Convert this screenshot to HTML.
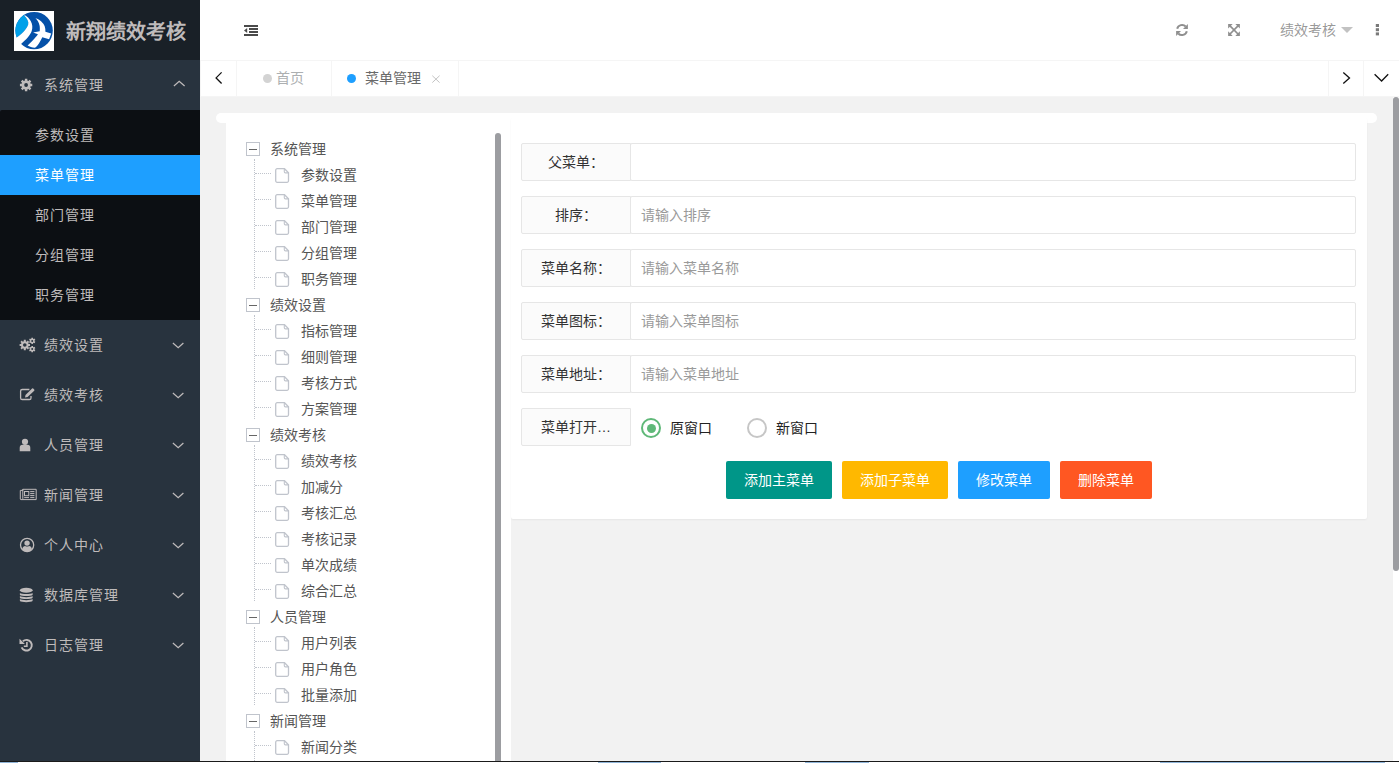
<!DOCTYPE html>
<html lang="zh-CN">
<head>
<meta charset="utf-8">
<title>新翔绩效考核</title>
<style>
*{box-sizing:border-box;margin:0;padding:0}
html,body{width:1399px;height:763px;overflow:hidden;background:#f2f2f2}
body{font-family:"Liberation Sans",sans-serif;font-size:14px;color:#333;position:relative;line-height:24px}
ul{list-style:none}
/* ---------- sidebar ---------- */
#side{position:absolute;left:0;top:0;width:200px;height:761px;background:#28333e;overflow:hidden}
#logo{position:absolute;left:0;top:0;width:200px;height:60px;background:#192027}
#logo svg{position:absolute;left:14px;top:11px;width:40px;height:40px}
#logo h1{position:absolute;left:66px;top:2px;height:60px;line-height:60px;font-size:20px;font-weight:bold;color:#bfbbbb;white-space:nowrap}
#menu{position:absolute;left:0;top:60px;width:200px}
#menu .it{position:relative;height:50px;line-height:50px;color:#bfbbbb;letter-spacing:1px;padding-left:44px;white-space:nowrap}
#menu .it svg.ic{position:absolute;left:14px;top:13px;width:30px;height:24px;fill:#bfbbbb}
#menu .it svg.ar{position:absolute;left:160px;top:10px;width:40px;height:30px;fill:none;stroke:#bfbbbb;stroke-width:1.25}
#menu .child{background:#0c0f13;padding:5px 0;border-top-left-radius:2px}
#menu .child li{height:40px;line-height:40px;padding-left:35px;color:#bfbbbb;letter-spacing:1px;white-space:nowrap}
#menu .child li.this{background:#1e9fff;color:#fff}
/* ---------- header ---------- */
#head{position:absolute;left:200px;top:0;width:1199px;height:60px;background:#fff}
#head svg{position:absolute}
#head .user{position:absolute;left:1080px;top:0;height:60px;line-height:60px;color:rgba(107,107,107,.7);white-space:nowrap}
#head .tri{position:absolute;left:1141px;top:27px;width:0;height:0;border:6px solid transparent;border-top-color:#c2c2c2;border-bottom-width:0}
/* ---------- tabs ---------- */
#tabs{position:absolute;left:200px;top:60px;width:1199px;height:37px;background:#fff;border-top:1px solid #f5f5f5;border-bottom:1px solid #f5f5f5}
#tabs .cell{position:absolute;top:0;height:35px;line-height:35px;white-space:nowrap}
#tabs .sep{position:absolute;top:0;width:1px;height:35px;background:#f5f5f5}
#tabs .dot{position:absolute;top:13px;width:9px;height:9px;border-radius:50%}
#tabs svg{position:absolute;fill:none}
/* ---------- content ---------- */
#strip{position:absolute;left:216px;top:113px;width:1161px;height:10px;background:#fff;border-radius:5px}
#treebox{position:absolute;left:226px;top:118px;width:285px;height:643px;background:#fff}
#formcard{position:absolute;left:511px;top:118px;width:856px;height:401px;border-radius:2px;background:#fff;box-shadow:0 1px 2px 0 rgba(0,0,0,.05)}
.thumb{position:absolute;width:6px;border-radius:3px;background:#9c9da1}
#vtrack{position:absolute;left:1393px;top:97px;width:6px;height:664px;background:#fff}
/* tree */
#tree{position:absolute;left:10px;top:18px;width:259px}
#tree .row{position:relative;height:26px;line-height:26px;color:#555;white-space:nowrap}
#tree .p{padding-left:34px}
#tree .c{padding-left:65px}
#tree .box{position:absolute;left:10px;top:6px;width:14px;height:14px;border:1px solid #c0c4cc}
#tree .box:after{content:"";position:absolute;left:2px;top:5.5px;width:8px;height:1px;background:#666}
#tree .c svg{position:absolute;left:39px;top:6px;width:15px;height:15px;fill:none;stroke:#c0c4cc;stroke-width:1.3}
#tree .c:before{content:"";position:absolute;left:19px;top:11px;width:16px;border-top:1px dotted #c0c4cc}
#tree .vl{position:absolute;left:18px;width:0;border-left:1px dotted #c0c4cc}
/* form */
.frow{position:absolute;left:10px;width:835px;height:38px}
.frow .lab{position:absolute;left:0;top:0;width:110px;height:38px;line-height:20px;padding:8px 15px;border:1px solid #e6e6e6;border-radius:2px 0 0 2px;background:#fbfbfb;text-align:center;overflow:hidden;white-space:nowrap;text-overflow:ellipsis;color:#333}
.frow .inp{position:absolute;left:109px;top:0;width:726px;height:38px;line-height:36px;border:1px solid #e6e6e6;border-radius:2px;background:#fff;padding-left:10px;color:#9a9a9a;white-space:nowrap}
.radio{position:absolute;top:0;height:38px;line-height:38px;white-space:nowrap;color:#222}
.radio i{position:absolute;left:0;top:10px;width:20px;height:20px;border-radius:50%;border:2px solid #c6c6c6}
.radio.on i{border-color:#5fb878}
.radio.on i:after{content:"";position:absolute;left:3.500px;top:3.500px;width:9px;height:9px;border-radius:50%;background:#5fb878}
.radio span{position:absolute;left:29px;top:1px}
.btn{position:absolute;top:343px;height:38px;line-height:38px;color:#fff;border-radius:2px;text-align:center;white-space:nowrap}
#bottomline{position:absolute;left:0;top:761px;width:1399px;height:1px;background:#1a1a1a}
#bottomrow{position:absolute;left:0;top:762px;width:1399px;height:1px;background:#fff}
#bottomrow i{position:absolute;top:0;height:1px;background:#8fb4d8}
</style>
</head>
<body>
<!-- SIDEBAR -->
<div id="side">
  <div id="logo">
    <svg viewBox="0 0 40 40"><defs><clipPath id="lc"><circle cx="20.1" cy="19.6" r="18.7"/></clipPath></defs><rect width="40" height="40" fill="#fff"/><circle cx="20.1" cy="19.6" r="18.7" fill="#0450a8"/><g clip-path="url(#lc)"><path fill="#00a0e9" d="M10.2 4.4C13 7.5 15 10.500 14.2 13.5C13.3 17 9.5 21.500 2.700 26.600L-2 26.600V0H10.200Z"/></g><g><path fill="#fff" d="M10.2 4.400C13 7.500 15 10.500 14.200 13.500C13.300 17 9.500 21.500 2.700 26.600L0 30L6.800 33.200C12 29 16.500 24 17.700 20.100C18.800 16.500 18.500 13 16.700 9.900C15.300 7.500 13 5.500 10.900 4.300Z"/><path fill="#fff" d="M21.500 7.200C26 8.500 29.500 12 30.700 15.300C31.300 17 31.500 19 31.400 20.800L37.200 22.500L35.100 28.300L28.300 26.200C27 29 25.500 31.500 24.900 32.400C23.500 34.500 22 36 20.800 36.800C18 36.500 15.500 35.500 13.600 34.400C16 32.500 18.500 30 20.500 27.600C22 25.800 23.200 24.500 23.900 23.300L19.100 21.500L25.700 20.300C25.900 18 25.900 16.500 25.600 14.700C25 11.500 23.500 9 21.500 7.200Z"/></g></svg>
    <h1>新翔绩效考核</h1>
  </div>
  <div id="menu">
    <div class="it"><svg class="ic" viewBox="0 0 30 24"><path fill-rule="evenodd" d="M10.90 7.46 L10.87 5.82 L13.33 5.82 L13.30 7.46 L14.46 7.94 L15.60 6.76 L17.34 8.50 L16.16 9.64 L16.64 10.80 L18.28 10.77 L18.28 13.23 L16.64 13.20 L16.16 14.36 L17.34 15.50 L15.60 17.24 L14.46 16.06 L13.30 16.54 L13.33 18.18 L10.87 18.18 L10.90 16.54 L9.74 16.06 L8.60 17.24 L6.86 15.50 L8.04 14.36 L7.56 13.20 L5.92 13.23 L5.92 10.77 L7.56 10.80 L8.04 9.64 L6.86 8.50 L8.60 6.76 L9.74 7.94Z M10.20 12.00a1.9 1.9 0 1 0 3.8 0a1.9 1.9 0 1 0 -3.8 0Z"/></svg>系统管理<svg class="ar" viewBox="0 0 40 30"><path d="M13.9 16L19.200 11.300L24.600 16"/></svg></div>
    <ul class="child">
      <li>参数设置</li>
      <li class="this">菜单管理</li>
      <li>部门管理</li>
      <li>分组管理</li>
      <li>职务管理</li>
    </ul>
    <div class="it"><svg class="ic" viewBox="0 0 30 24"><path fill-rule="evenodd" d="M9.80 8.23 L9.77 6.80 L11.83 6.80 L11.80 8.23 L12.76 8.63 L13.74 7.59 L15.21 9.06 L14.17 10.04 L14.57 11.00 L16.00 10.97 L16.00 13.03 L14.57 13.00 L14.17 13.96 L15.21 14.94 L13.74 16.41 L12.76 15.37 L11.80 15.77 L11.83 17.20 L9.77 17.20 L9.80 15.77 L8.84 15.37 L7.86 16.41 L6.39 14.94 L7.43 13.96 L7.03 13.00 L5.60 13.03 L5.60 10.97 L7.03 11.00 L7.43 10.04 L6.39 9.06 L7.86 7.59 L8.84 8.63Z M9.00 12.00a1.8 1.8 0 1 0 3.6 0a1.8 1.8 0 1 0 -3.6 0Z"/><path fill-rule="evenodd" d="M17.32 5.78 L17.35 4.71 L19.05 4.71 L19.08 5.78 L19.60 6.08 L20.53 5.57 L21.39 7.05 L20.48 7.60 L20.48 8.20 L21.39 8.75 L20.53 10.23 L19.60 9.72 L19.08 10.02 L19.05 11.09 L17.35 11.09 L17.32 10.02 L16.80 9.72 L15.87 10.23 L15.01 8.75 L15.92 8.20 L15.92 7.60 L15.01 7.05 L15.87 5.57 L16.80 6.08Z M17.20 7.90a1.0 1.0 0 1 0 2.0 0a1.0 1.0 0 1 0 -2.0 0Z"/><path fill-rule="evenodd" d="M17.32 13.98 L17.35 12.91 L19.05 12.91 L19.08 13.98 L19.60 14.28 L20.53 13.77 L21.39 15.25 L20.48 15.80 L20.48 16.40 L21.39 16.95 L20.53 18.43 L19.60 17.92 L19.08 18.22 L19.05 19.29 L17.35 19.29 L17.32 18.22 L16.80 17.92 L15.87 18.43 L15.01 16.95 L15.92 16.40 L15.92 15.80 L15.01 15.25 L15.87 13.77 L16.80 14.28Z M17.20 16.10a1.0 1.0 0 1 0 2.0 0a1.0 1.0 0 1 0 -2.0 0Z"/></svg>绩效设置<svg class="ar" viewBox="0 0 40 30"><path d="M12.9 13L18.200 17.600L23.400 13"/></svg></div>
    <div class="it"><svg class="ic" viewBox="0 0 30 24"><path fill="none" stroke="#bfbbbb" stroke-width="1.3" d="M15.4 6.5H8.2a1.6 1.6 0 0 0-1.6 1.6v6.8a1.6 1.6 0 0 0 1.6 1.6h7.2a1.6 1.6 0 0 0 1.6-1.6V13"/><path d="M11 14.6l.5-2.6 6.6-6.4a.8.8 0 0 1 1.1 0l1 1a.8.8 0 0 1 0 1.1l-6.6 6.4z"/></svg>绩效考核<svg class="ar" viewBox="0 0 40 30"><path d="M12.9 13L18.200 17.600L23.400 13"/></svg></div>
    <div class="it"><svg class="ic" viewBox="0 0 30 24"><circle cx="11" cy="8.8" r="3.1"/><path d="M5.7 18.2v-3.4a3 3 0 0 1 3-3h4.6a3 3 0 0 1 3 3v3.4z"/></svg>人员管理<svg class="ar" viewBox="0 0 40 30"><path d="M12.9 13L18.200 17.600L23.400 13"/></svg></div>
    <div class="it"><svg class="ic" viewBox="0 0 30 24"><g fill="none" stroke="#bfbbbb" stroke-width="1"><path d="M8.8 6.3h13.4v10.3H6.9a.6.6 0 0 1-.6-.6V7.4h2.5z"/><path d="M8.8 6.3v9.6"/><rect x="10.5" y="8.5" width="4.3" height="4.2"/><path d="M16.2 8.6h4.2M16.2 10.6h4.2M16.2 12.6h4.2M10.2 14.6h4.8M16.2 14.6h4.2"/></g></svg>新闻管理<svg class="ar" viewBox="0 0 40 30"><path d="M12.9 13L18.200 17.600L23.400 13"/></svg></div>
    <div class="it"><svg class="ic" viewBox="0 0 30 24"><circle cx="13.1" cy="12" r="6.6" fill="none" stroke="#bfbbbb" stroke-width="1.3"/><circle cx="13.05" cy="10.1" r="2.7"/><path d="M8.2 16.2c.4-2.2 1.6-3.2 2.9-3.3.6.4 1.3.6 2 .6s1.400-.2 2-.6c1.300.1 2.500 1.100 2.900 3.300a6.300 6.300 0 0 1-9.800 0z"/></svg>个人中心<svg class="ar" viewBox="0 0 40 30"><path d="M12.9 13L18.200 17.600L23.400 13"/></svg></div>
    <div class="it"><svg class="ic" viewBox="0 0 30 24"><ellipse cx="12.25" cy="7.2" rx="6.35" ry="2.5"/><path d="M5.9 10.0c1.5 1.4 11.2 1.4 12.700 0v1.9c-1.5 1.4-11.200 1.4-12.700 0z"/><path d="M5.9 13.1c1.5 1.4 11.2 1.4 12.700 0v1.9c-1.5 1.4-11.200 1.4-12.700 0z"/><path d="M5.9 16.1c1.5 1.4 11.2 1.4 12.700 0v2.0c-1.5 1.4-11.200 1.4-12.700 0z"/></svg>数据库管理<svg class="ar" viewBox="0 0 40 30"><path d="M12.9 13L18.200 17.600L23.400 13"/></svg></div>
    <div class="it"><svg class="ic" viewBox="0 0 30 24"><path fill="none" stroke="#bfbbbb" stroke-width="1.9" d="M8.9 8.3A5.3 5.3 0 1 1 7.6 14.300"/><path d="M5.5 5.800v5.200h5.400z"/><path fill="none" stroke="#bfbbbb" stroke-width="1.6" d="M12.9 9v4.200h-3.100"/></svg>日志管理<svg class="ar" viewBox="0 0 40 30"><path d="M12.9 13L18.200 17.600L23.400 13"/></svg></div>
  </div>
</div>
<!-- HEADER -->
<div id="head">
  <svg style="left:30px;top:15px;width:60px;height:32px" viewBox="0 0 60 32" fill="#4a4a4a"><rect x="14" y="10" width="14" height="2"/><rect x="19" y="13" width="9" height="2"/><rect x="19" y="16" width="9" height="2"/><rect x="14" y="19" width="14" height="2"/><path d="M17.200 13v5l-3.200-2.500z"/></svg>
  <svg style="left:967px;top:18px;width:30px;height:24px" viewBox="0 0 30 24"><g fill="none" stroke="#8f8f8f" stroke-width="2"><path d="M10.2 10.800A5 5 0 0 1 18.700 8.500"/><path d="M19.800 13.200A5 5 0 0 1 11.300 15.500"/></g><g fill="#8f8f8f"><path d="M20.900 6.100v4.900h-4.900z"/><path d="M9.100 17.900v-4.900h4.900z"/></g></svg>
  <svg style="left:1019px;top:18px;width:30px;height:24px" viewBox="0 0 30 24"><g fill="#8f8f8f"><path d="M9.100 6h4.600l-4.600 4.600z"/><path d="M20.900 6v4.600l-4.600-4.600z"/><path d="M9.100 17.900v-4.600l4.600 4.600z"/><path d="M20.900 17.900h-4.600l4.600-4.600z"/></g><path stroke="#8f8f8f" stroke-width="1.700" d="M10.500 7.400l9 9.100M19.500 7.400l-9 9.100"/></svg>
  <svg style="left:1175px;top:23px;width:5px;height:14px" viewBox="0 0 5 14" fill="#7a7a7a"><rect x=".8" y="1" width="3.200" height="3"/><rect x=".8" y="5.200" width="3.200" height="3"/><rect x=".8" y="9.400" width="3.200" height="3"/></svg>
  <div class="user">绩效考核</div>
  <div class="tri"></div>
</div>
<!-- TABS -->
<div id="tabs">
  <svg style="left:3px;top:5px;width:30px;height:24px" viewBox="0 0 30 24"><path stroke="#111" stroke-width="1.300" d="M18.600 6.400L13.100 11.900L18.600 17.500"/></svg>
  <svg style="left:1130px;top:1px;width:69px;height:34px" viewBox="0 0 69 34"><path stroke="#111" stroke-width="1.300" d="M13.300 10.400L19.500 15.900L13.300 21.600M44.600 12.200L51.600 19L58.200 12.200"/></svg>
  <svg style="left:221px;top:5px;width:30px;height:24px" viewBox="0 0 30 24"><path stroke="#c4c4c4" stroke-width="1" d="M11.300 9.700l7.300 6.900M18.600 9.700l-7.300 6.900"/></svg>
  <div class="sep" style="left:0"></div>
  <div class="sep" style="left:36px"></div>
  <div class="dot" style="left:63px;background:#d3d3d3"></div>
  <div class="cell" style="left:76px;color:#acafb1">首页</div>
  <div class="sep" style="left:131px"></div>
  <div class="dot" style="left:147px;background:#1e9fff"></div>
  <div class="cell" style="left:165px;color:#696969">菜单管理</div>
  <div class="sep" style="left:258px"></div>
  <div class="sep" style="left:1128px"></div>
  <div class="sep" style="left:1163px"></div>
</div>
<!-- CONTENT -->
<div id="strip"></div>
<div id="treebox">
  <div id="tree">
    <div class="row p"><span class="box"></span>系统管理</div>
    <div class="vl" style="top:23px;height:130px"></div>
    <div class="row c"><svg viewBox="0 0 15 15"><path d="M2.2 .7h7.3l4 4v8.100a1.500 1.500 0 0 1-1.500 1.500H2.200A1.500 1.500 0 0 1 .700 12.800V2.200A1.500 1.500 0 0 1 2.200 .700z"/><path d="M9.300 .800v3a1.100 1.100 0 0 0 1.100 1.100h3" stroke-width="1.100"/></svg>参数设置</div>
    <div class="row c"><svg viewBox="0 0 15 15"><path d="M2.2 .7h7.3l4 4v8.100a1.500 1.500 0 0 1-1.500 1.500H2.200A1.500 1.500 0 0 1 .700 12.800V2.200A1.500 1.500 0 0 1 2.200 .700z"/><path d="M9.300 .800v3a1.100 1.100 0 0 0 1.100 1.100h3" stroke-width="1.100"/></svg>菜单管理</div>
    <div class="row c"><svg viewBox="0 0 15 15"><path d="M2.2 .7h7.3l4 4v8.100a1.500 1.500 0 0 1-1.500 1.500H2.200A1.500 1.500 0 0 1 .700 12.800V2.200A1.500 1.500 0 0 1 2.200 .700z"/><path d="M9.300 .800v3a1.100 1.100 0 0 0 1.100 1.100h3" stroke-width="1.100"/></svg>部门管理</div>
    <div class="row c"><svg viewBox="0 0 15 15"><path d="M2.2 .7h7.3l4 4v8.100a1.500 1.500 0 0 1-1.500 1.500H2.200A1.500 1.500 0 0 1 .700 12.800V2.200A1.500 1.500 0 0 1 2.200 .700z"/><path d="M9.300 .800v3a1.100 1.100 0 0 0 1.100 1.100h3" stroke-width="1.100"/></svg>分组管理</div>
    <div class="row c"><svg viewBox="0 0 15 15"><path d="M2.2 .7h7.3l4 4v8.100a1.500 1.500 0 0 1-1.500 1.500H2.200A1.500 1.500 0 0 1 .700 12.800V2.200A1.500 1.500 0 0 1 2.200 .700z"/><path d="M9.300 .800v3a1.100 1.100 0 0 0 1.100 1.100h3" stroke-width="1.100"/></svg>职务管理</div>
    <div class="row p"><span class="box"></span>绩效设置</div>
    <div class="vl" style="top:179px;height:104px"></div>
    <div class="row c"><svg viewBox="0 0 15 15"><path d="M2.2 .7h7.3l4 4v8.100a1.500 1.500 0 0 1-1.500 1.500H2.200A1.500 1.500 0 0 1 .700 12.800V2.200A1.500 1.500 0 0 1 2.200 .700z"/><path d="M9.300 .800v3a1.100 1.100 0 0 0 1.100 1.100h3" stroke-width="1.100"/></svg>指标管理</div>
    <div class="row c"><svg viewBox="0 0 15 15"><path d="M2.2 .7h7.3l4 4v8.100a1.500 1.500 0 0 1-1.500 1.500H2.200A1.500 1.500 0 0 1 .700 12.800V2.200A1.500 1.500 0 0 1 2.200 .700z"/><path d="M9.300 .800v3a1.100 1.100 0 0 0 1.100 1.100h3" stroke-width="1.100"/></svg>细则管理</div>
    <div class="row c"><svg viewBox="0 0 15 15"><path d="M2.2 .7h7.3l4 4v8.100a1.500 1.500 0 0 1-1.500 1.500H2.200A1.500 1.500 0 0 1 .700 12.800V2.200A1.500 1.500 0 0 1 2.200 .700z"/><path d="M9.300 .800v3a1.100 1.100 0 0 0 1.100 1.100h3" stroke-width="1.100"/></svg>考核方式</div>
    <div class="row c"><svg viewBox="0 0 15 15"><path d="M2.2 .7h7.3l4 4v8.100a1.500 1.500 0 0 1-1.500 1.500H2.200A1.500 1.500 0 0 1 .700 12.800V2.200A1.500 1.500 0 0 1 2.200 .700z"/><path d="M9.300 .800v3a1.100 1.100 0 0 0 1.100 1.100h3" stroke-width="1.100"/></svg>方案管理</div>
    <div class="row p"><span class="box"></span>绩效考核</div>
    <div class="vl" style="top:309px;height:156px"></div>
    <div class="row c"><svg viewBox="0 0 15 15"><path d="M2.2 .7h7.3l4 4v8.100a1.500 1.500 0 0 1-1.500 1.500H2.200A1.500 1.500 0 0 1 .700 12.800V2.200A1.500 1.500 0 0 1 2.200 .700z"/><path d="M9.300 .800v3a1.100 1.100 0 0 0 1.100 1.100h3" stroke-width="1.100"/></svg>绩效考核</div>
    <div class="row c"><svg viewBox="0 0 15 15"><path d="M2.2 .7h7.3l4 4v8.100a1.500 1.500 0 0 1-1.500 1.500H2.200A1.500 1.500 0 0 1 .700 12.800V2.200A1.500 1.500 0 0 1 2.200 .700z"/><path d="M9.300 .800v3a1.100 1.100 0 0 0 1.100 1.100h3" stroke-width="1.100"/></svg>加减分</div>
    <div class="row c"><svg viewBox="0 0 15 15"><path d="M2.2 .7h7.3l4 4v8.100a1.500 1.500 0 0 1-1.500 1.500H2.200A1.500 1.500 0 0 1 .700 12.800V2.200A1.500 1.500 0 0 1 2.200 .700z"/><path d="M9.300 .800v3a1.100 1.100 0 0 0 1.100 1.100h3" stroke-width="1.100"/></svg>考核汇总</div>
    <div class="row c"><svg viewBox="0 0 15 15"><path d="M2.2 .7h7.3l4 4v8.100a1.500 1.500 0 0 1-1.500 1.500H2.200A1.500 1.500 0 0 1 .700 12.800V2.200A1.500 1.500 0 0 1 2.200 .700z"/><path d="M9.300 .800v3a1.100 1.100 0 0 0 1.100 1.100h3" stroke-width="1.100"/></svg>考核记录</div>
    <div class="row c"><svg viewBox="0 0 15 15"><path d="M2.2 .7h7.3l4 4v8.100a1.500 1.500 0 0 1-1.500 1.500H2.200A1.500 1.500 0 0 1 .700 12.800V2.200A1.500 1.500 0 0 1 2.200 .700z"/><path d="M9.300 .800v3a1.100 1.100 0 0 0 1.100 1.100h3" stroke-width="1.100"/></svg>单次成绩</div>
    <div class="row c"><svg viewBox="0 0 15 15"><path d="M2.2 .7h7.3l4 4v8.100a1.500 1.500 0 0 1-1.500 1.500H2.200A1.500 1.500 0 0 1 .700 12.800V2.200A1.500 1.500 0 0 1 2.200 .700z"/><path d="M9.300 .800v3a1.100 1.100 0 0 0 1.100 1.100h3" stroke-width="1.100"/></svg>综合汇总</div>
    <div class="row p"><span class="box"></span>人员管理</div>
    <div class="vl" style="top:491px;height:78px"></div>
    <div class="row c"><svg viewBox="0 0 15 15"><path d="M2.2 .7h7.3l4 4v8.100a1.500 1.500 0 0 1-1.500 1.500H2.200A1.500 1.500 0 0 1 .700 12.800V2.200A1.500 1.500 0 0 1 2.200 .700z"/><path d="M9.300 .800v3a1.100 1.100 0 0 0 1.100 1.100h3" stroke-width="1.100"/></svg>用户列表</div>
    <div class="row c"><svg viewBox="0 0 15 15"><path d="M2.2 .7h7.3l4 4v8.100a1.500 1.500 0 0 1-1.500 1.500H2.200A1.500 1.500 0 0 1 .700 12.800V2.200A1.500 1.500 0 0 1 2.200 .700z"/><path d="M9.300 .800v3a1.100 1.100 0 0 0 1.100 1.100h3" stroke-width="1.100"/></svg>用户角色</div>
    <div class="row c"><svg viewBox="0 0 15 15"><path d="M2.2 .7h7.3l4 4v8.100a1.500 1.500 0 0 1-1.500 1.500H2.200A1.500 1.500 0 0 1 .700 12.800V2.200A1.500 1.500 0 0 1 2.200 .700z"/><path d="M9.300 .800v3a1.100 1.100 0 0 0 1.100 1.100h3" stroke-width="1.100"/></svg>批量添加</div>
    <div class="row p"><span class="box"></span>新闻管理</div>
    <div class="vl" style="top:595px;height:52px"></div>
    <div class="row c"><svg viewBox="0 0 15 15"><path d="M2.2 .7h7.3l4 4v8.100a1.500 1.500 0 0 1-1.500 1.500H2.200A1.500 1.500 0 0 1 .700 12.800V2.200A1.500 1.500 0 0 1 2.200 .700z"/><path d="M9.300 .800v3a1.100 1.100 0 0 0 1.100 1.100h3" stroke-width="1.100"/></svg>新闻分类</div>
    <div class="row c"><svg viewBox="0 0 15 15"><path d="M2.2 .7h7.3l4 4v8.100a1.500 1.500 0 0 1-1.500 1.500H2.200A1.500 1.500 0 0 1 .700 12.800V2.200A1.500 1.500 0 0 1 2.200 .700z"/><path d="M9.300 .800v3a1.100 1.100 0 0 0 1.100 1.100h3" stroke-width="1.100"/></svg>新闻列表</div>
  </div>
  <div class="thumb" style="left:269px;top:15px;height:640px"></div>
</div>
<div id="formcard">
  <div class="frow" style="top:25px"><div class="lab">父菜单：</div><div class="inp"></div></div>
  <div class="frow" style="top:78px"><div class="lab">排序：</div><div class="inp">请输入排序</div></div>
  <div class="frow" style="top:131px"><div class="lab">菜单名称：</div><div class="inp">请输入菜单名称</div></div>
  <div class="frow" style="top:184px"><div class="lab">菜单图标：</div><div class="inp">请输入菜单图标</div></div>
  <div class="frow" style="top:237px"><div class="lab">菜单地址：</div><div class="inp">请输入菜单地址</div></div>
  <div class="frow" style="top:290px"><div class="lab">菜单打开…</div>
    <div class="radio on" style="left:120px"><i></i><span>原窗口</span></div>
    <div class="radio" style="left:226px"><i></i><span>新窗口</span></div>
  </div>
  <div class="btn" style="left:215px;width:106px;background:#009688">添加主菜单</div>
  <div class="btn" style="left:331px;width:106px;background:#ffb800">添加子菜单</div>
  <div class="btn" style="left:447px;width:92px;background:#1e9fff">修改菜单</div>
  <div class="btn" style="left:549px;width:92px;background:#ff5722">删除菜单</div>
</div>
<div id="vtrack"><div class="thumb" style="left:0;top:0;height:474px"></div></div>
<div id="bottomline"></div>
<div id="bottomrow"><i style="left:0;width:18px"></i><i style="left:598px;width:63px"></i><i style="left:805px;width:64px"></i><i style="left:1160px;width:225px"></i></div>
</body>
</html>
